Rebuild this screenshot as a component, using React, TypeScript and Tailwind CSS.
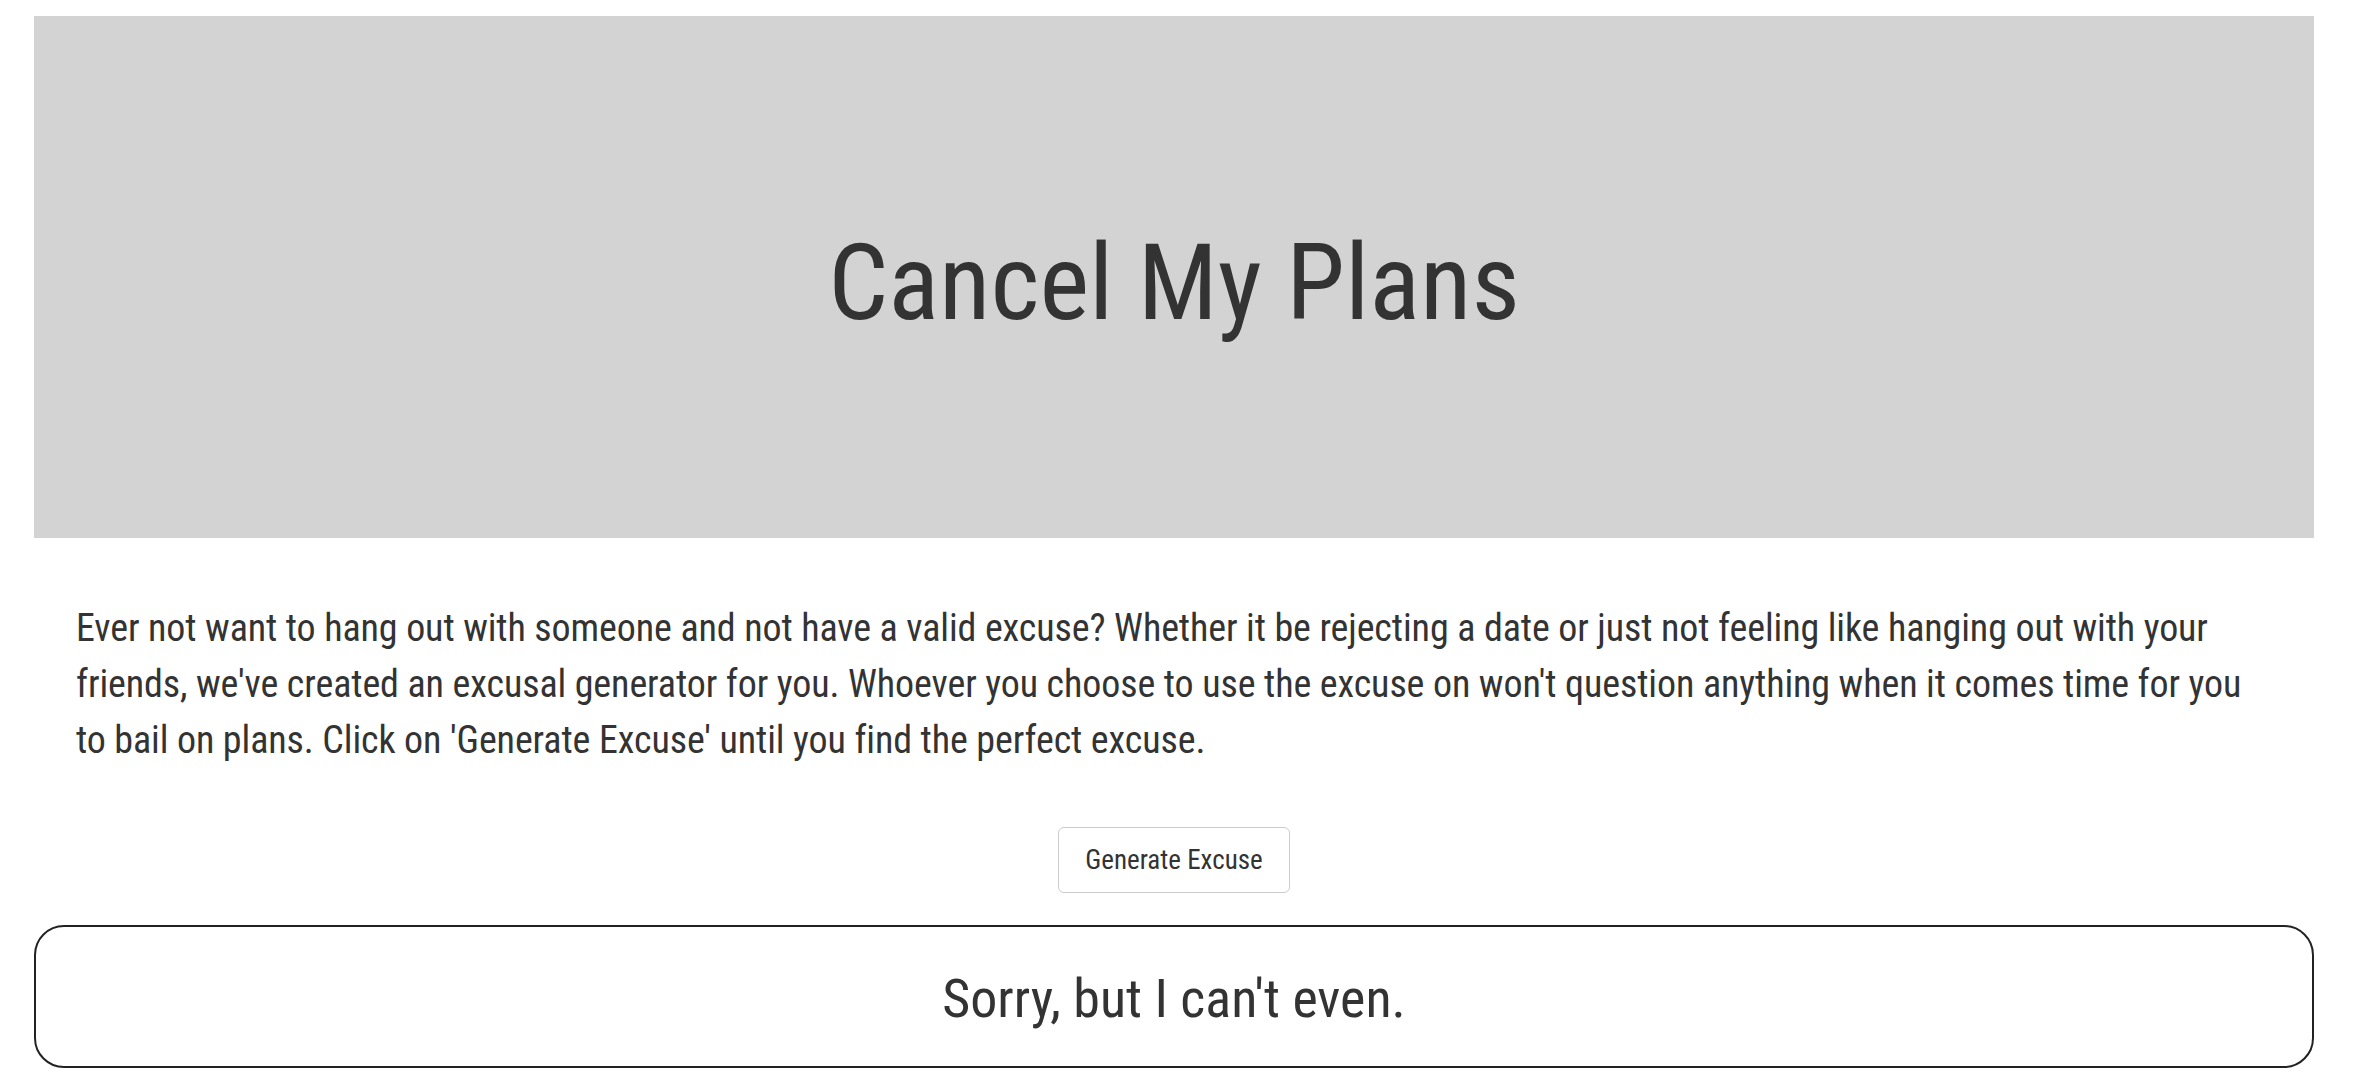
import React from "react";

// 폰트: Dosis 대체 (Roboto Condensed)
const face = "font-['Roboto_Condensed','Open_Sans',sans-serif]";

export default function App() {
  return (
    <div className={`min-h-screen bg-white pt-[16px] pr-[56px] pl-[34px] text-[#333333] ${face}`}>
      {/* 점보트론 */}
      <div className="flex h-[522px] items-center justify-center bg-[#d3d3d3] pt-[14px]">
        <h1 className="text-[106px] leading-[1.2] font-normal">Cancel My Plans</h1>
      </div>

      {/* 소개 문단 */}
      <p className="mt-[62px] px-[42px] text-[38px] leading-[56px] tracking-[-0.1px]">
        Ever not want to hang out with someone and not have a valid excuse? Whether it be rejecting a date or just
        not feeling like hanging out with your friends, we've created an excusal generator for you. Whoever you
        choose to use the excuse on won't question anything when it comes time for you to bail on plans. Click on
        'Generate Excuse' until you find the perfect excuse.
      </p>

      {/* 버튼 */}
      <div className="mt-[59px] flex justify-center">
        <button
          type="button"
          className="rounded-[6px] border border-[#cccccc] bg-white px-[26px] py-[14px] text-[27px] leading-[36px] text-[#333333]"
        >
          Generate Excuse
        </button>
      </div>

      {/* 결과 */}
      <div className="mt-[32px] rounded-[30px] border-2 border-[#222222] pt-[38px] pb-[34px] text-center">
        <p className="text-[54px] leading-[67px]">Sorry, but I can't even.</p>
      </div>
    </div>
  );
}
